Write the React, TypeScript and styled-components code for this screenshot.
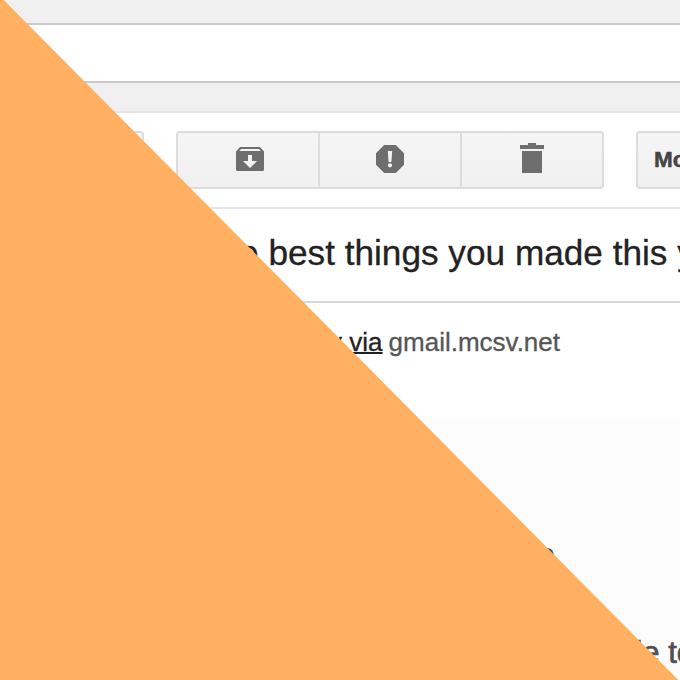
import React from "react";
import styled, { createGlobalStyle } from "styled-components";

const GlobalStyle = createGlobalStyle`
  *, *::before, *::after { box-sizing: border-box; }
  html, body { margin: 0; padding: 0; background: #fff; overflow: hidden; }
  body { font-family: "Liberation Sans", Arial, sans-serif; }
`;

const Page = styled.main`
  position: relative;
  display: flex;
  flex-direction: column;
  width: 680px;
  height: 680px;
  overflow: hidden;
  background: #fff;
`;

const Band = styled.div<{ $height: number; $fill: string; $line: string }>`
  flex: none;
  height: ${(p) => p.$height}px;
  background: ${(p) => p.$fill};
  border-bottom: 2px solid ${(p) => p.$line};
`;

const Toolbar = styled.div`
  flex: none;
  display: flex;
  gap: 32px;
  height: 96px;
  padding-top: 18px;
  border-bottom: 2px solid #e5e5e5;
`;

const ButtonGroup = styled.div<{ $width: number }>`
  flex: none;
  display: flex;
  width: ${(p) => p.$width}px;
  height: 58px;
  border: 2px solid #dcdcdc;
  border-radius: 4px;
  background: linear-gradient(#f5f5f5, #f0f0f0);
  overflow: hidden;
`;

const ToolButton = styled.button<{ $width: number; $left?: number; $bottom?: number }>`
  flex: none;
  display: flex;
  align-items: center;
  justify-content: center;
  width: ${(p) => p.$width}px;
  padding: 0 0 ${(p) => p.$bottom ?? 2}px ${(p) => p.$left ?? 0}px;
  border: 0;
  background: none;
  color: #6e6e6e;

  & + & {
    border-left: 2px solid #dcdcdc;
  }
`;

const MenuButton = styled.button`
  padding: 0 0 0 16px;
  border: 0;
  background: none;
  color: #444;
  font: bold 22.5px/1 "Liberation Sans", Arial, sans-serif;
  -webkit-text-stroke: 0.5px #444;
  white-space: nowrap;
`;

const Glyph = styled.svg`
  display: block;
  flex: none;
`;

const SubjectRow = styled.header`
  flex: none;
  height: 94px;
  padding: 24px 0 0 198px;
  border-bottom: 2px solid #d8d8d8;
`;

const Subject = styled.h1`
  margin: 0;
  color: #222;
  font-size: 35.2px;
  font-weight: 400;
  line-height: 40px;
  white-space: nowrap;
  -webkit-text-stroke: 0.3px #222;
`;

const SenderRow = styled.div`
  flex: none;
  display: flex;
  justify-content: flex-end;
  gap: 6px;
  height: 116px;
  padding: 24px 120px 0 0;
  color: #555;
  font-size: 26px;
  line-height: 30px;
  white-space: nowrap;
  -webkit-text-stroke: 0.3px currentColor;
`;

const Via = styled.span`
  height: 30px;
  color: #222;
  text-decoration: underline;
  text-decoration-thickness: 2px;
  text-underline-offset: 1px;
  text-decoration-skip-ink: none;
`;

const Message = styled.article`
  flex: 1;
  padding-top: 116px;
  background: #fcfcfc;
  color: #505050;
  font: 500 31px/40px "Liberation Sans", Arial, sans-serif;
  white-space: nowrap;
`;

const Greeting = styled.p`
  width: 555px;
  margin: 0 0 58px;
  text-align: right;
`;

const Copy = styled.p`
  margin: 0;
  padding-left: 601px;
  -webkit-text-stroke: 0.7px #505050;
`;

const Wedge = styled.div`
  position: absolute;
  inset: 0;
  background: #ffb061;
  clip-path: polygon(0 0, 3.7px 0, 678.3px 680px, 0 680px);
`;

const ArchiveIcon = () => (
  <Glyph width="28" height="24" viewBox="0 0 28 24" fill="currentColor">
    <path
      fillRule="evenodd"
      d="M4 0H24L28 4.5V22.5Q28 24 26.5 24H1.5Q0 24 0 22.5V4.5ZM5 2L3.3 4H24.7L23 2ZM12 8V14H7L14 21L21 14H16V8Z"
    />
  </Glyph>
);

const SpamIcon = () => (
  <Glyph width="28" height="28" viewBox="0 0 28 28" fill="currentColor">
    <path
      fillRule="evenodd"
      d="M8.2 0H19.8L28 8.2V19.8L19.8 28H8.2L0 19.8V8.2ZM11.8 6L12.6 17H15.4L16.2 6ZM14 18.2A2.1 2.1 0 1 0 14 22.4A2.1 2.1 0 1 0 14 18.2Z"
    />
  </Glyph>
);

const TrashIcon = () => (
  <Glyph width="24" height="30" viewBox="0 0 24 30" fill="currentColor">
    <path d="M8 0H16V2H24V6H0V2H8ZM2 8H22V30H2Z" />
  </Glyph>
);

export default function App() {
  return (
    <Page>
      <GlobalStyle />
      <Band $height={25} $fill="#f0f0f0" $line="#cacaca" />
      <Band $height={58} $fill="#ffffff" $line="#cacaca" />
      <Band $height={30} $fill="#f0f0f0" $line="#e5e5e5" />
      <Toolbar>
        <ButtonGroup $width={144} />
        <ButtonGroup $width={428}>
          <ToolButton $width={140} $left={4} aria-label="Archive"><ArchiveIcon /></ToolButton>
          <ToolButton $width={142} aria-label="Report spam"><SpamIcon /></ToolButton>
          <ToolButton $width={142} $bottom={4} aria-label="Delete"><TrashIcon /></ToolButton>
        </ButtonGroup>
        <ButtonGroup $width={140}>
          <MenuButton>More</MenuButton>
        </ButtonGroup>
      </Toolbar>
      <SubjectRow>
        <Subject>The best things you made this year</Subject>
      </SubjectRow>
      <SenderRow>
        <Via>by via</Via>
        <span>gmail.mcsv.net</span>
      </SenderRow>
      <Message>
        <Greeting>o</Greeting>
        <Copy>able to</Copy>
      </Message>
      <Wedge />
    </Page>
  );
}
